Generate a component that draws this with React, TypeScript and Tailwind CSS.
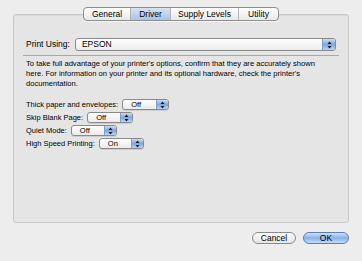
import React from 'react';

const font = { fontFamily: '"Liberation Sans", Arial, sans-serif' };

function Arrows({ size = 'sm' }: { size?: 'sm' | 'lg' }) {
  return (
    <div
      className={
        'flex h-full items-center justify-center rounded-r-[3px] border-l border-[#7f9fc9] bg-gradient-to-b from-[#c9dcf5] via-[#7ea7df] to-[#b8d3f3] ' +
        (size === 'lg' ? 'w-[13px]' : 'w-[12px]')
      }
    >
      <svg width="5" height="8" viewBox="0 0 5 8">
        <path d="M2.5 0.5 L4.5 3 L0.5 3 Z" fill="#1a1a1a" />
        <path d="M2.5 7.5 L4.5 5 L0.5 5 Z" fill="#1a1a1a" />
      </svg>
    </div>
  );
}

function PopUp({ value, width }: { value: string; width: string }) {
  return (
    <div
      className={
        'flex h-[11px] items-center overflow-hidden rounded-[3px] border border-[#8a8a8a] bg-gradient-to-b from-white to-[#eaeaea] shadow-[0_1px_0_rgba(0,0,0,0.1)] ' +
        width
      }
    >
      <span className="flex-1 pl-[8px] text-[7.5px] leading-none text-black">{value}</span>
      <Arrows />
    </div>
  );
}

const options = [
  { label: 'Thick paper and envelopes:', value: 'Off', width: 'w-[47px]' },
  { label: 'Skip Blank Page:', value: 'Off', width: 'w-[46px]' },
  { label: 'Quiet Mode:', value: 'Off', width: 'w-[46px]' },
  { label: 'High Speed Printing:', value: 'On', width: 'w-[45px]' },
];

const tabs = ['General', 'Driver', 'Supply Levels', 'Utility'];
const tabWidths = ['w-[46px]', 'w-[40px]', 'w-[68px]', 'w-[40px]'];

export default function App() {
  return (
    <div className="flex h-[261px] w-[362px] flex-col bg-[#ededed] text-black" style={font}>
      {/* Tab panel */}
      <div className="mx-[13px] mt-[14px] flex h-[209px] flex-col rounded-[3px] border border-[#c9c9c9] bg-[#e5e5e5] shadow-[inset_0_1px_1px_rgba(0,0,0,0.05)]">
        <div className="-mt-[8px] flex h-[14px] self-center overflow-hidden rounded-[4px] border border-[#8e8e8e] bg-gradient-to-b from-white to-[#e8e8e8] shadow-[0_1px_0_rgba(255,255,255,0.6)]">
          {tabs.map((t, i) => (
            <div
              key={t}
              className={
                'flex items-center justify-center text-[8.5px] leading-none ' +
                tabWidths[i] +
                (i > 0 ? ' border-l border-[#b3b3b3]' : '') +
                (t === 'Driver' ? ' bg-gradient-to-b from-[#d5e3f4] to-[#a9c4e6]' : '')
              }
            >
              {t}
            </div>
          ))}
        </div>

        <div className="flex flex-col px-[9px]">
          {/* Print Using */}
          <div className="mt-[17px] flex items-center pl-[3px] pr-[3px]">
            <span className="mr-[5px] text-[8.5px] leading-none">Print Using:</span>
            <div className="flex h-[13px] flex-1 items-center overflow-hidden rounded-[3px] border border-[#8a8a8a] bg-gradient-to-b from-white to-[#ececec]">
              <span className="flex-1 pl-[6px] text-[8.5px] leading-none">EPSON</span>
              <Arrows size="lg" />
            </div>
          </div>
          <div className="mt-[4px] h-px bg-[#a8a8a8]" />

          <p className="mt-[3px] whitespace-nowrap pl-[3px] text-[7.6px] leading-[10px]">
            To take full advantage of your printer&apos;s options, confirm that they are accurately shown
            <br />
            here. For information on your printer and its optional hardware, check the printer&apos;s
            <br />
            documentation.
          </p>

          <div className="mt-[10px] flex flex-col gap-[2px] pl-[3px]">
            {options.map((o) => (
              <div key={o.label} className="flex h-[11px] items-center">
                <span className="mr-[4px] text-[7.5px] leading-none">{o.label}</span>
                <PopUp value={o.value} width={o.width} />
              </div>
            ))}
          </div>
        </div>
      </div>

      {/* Buttons */}
      <div className="mt-[9px] flex justify-end gap-[7px] pr-[13px]">
        <button className="flex h-[12px] w-[44px] items-center justify-center rounded-full border border-[#8a8a8a] bg-gradient-to-b from-white to-[#e4e4e4] text-[8.5px] leading-none">
          Cancel
        </button>
        <button className="flex h-[12px] w-[46px] items-center justify-center rounded-full border border-[#5a7fb8] bg-gradient-to-b from-[#cfe0f6] via-[#8ab2e6] to-[#c3dbf7] text-[8.5px] leading-none">
          OK
        </button>
      </div>
    </div>
  );
}
